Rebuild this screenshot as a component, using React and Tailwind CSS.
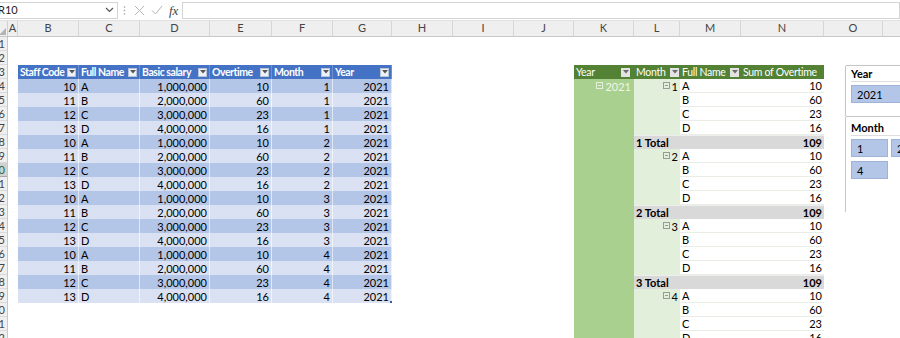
import React from "react";

const font = "font-['Lato','Liberation_Sans',sans-serif]";

const colDefs = [
  ["A", 10], ["B", 61], ["C", 61], ["D", 70], ["E", 62], ["F", 61], ["G", 59],
  ["H", 61], ["I", 61], ["J", 60], ["K", 60], ["L", 46], ["M", 61], ["N", 83],
  ["O", 59], ["P", 60],
];

const people = [
  ["10", "A", "1,000,000", "10"],
  ["11", "B", "2,000,000", "60"],
  ["12", "C", "3,000,000", "23"],
  ["13", "D", "4,000,000", "16"],
];

const tableRows = [];
[1, 2, 3, 4].forEach((m) =>
  people.forEach((p) => tableRows.push([...p, String(m), "2021"]))
);

function Tri({ color = "#404040" }) {
  return (
    <svg width="6" height="4" viewBox="0 0 6 4">
      <path d="M0 0 L6 0 L3 3.5 Z" fill={color} />
    </svg>
  );
}

function FilterBtn({ variant = "blue" }) {
  if (variant === "green") {
    return (
      <span className="w-[9px] h-[9px] bg-[#e3e3e3] flex items-center justify-center shrink-0">
        <Tri color="#6b6b6b" />
      </span>
    );
  }
  return (
    <span className="w-[9px] h-[9px] bg-[#eef1f6] border border-[#b9c3d6] flex items-center justify-center shrink-0">
      <Tri color="#555" />
    </span>
  );
}

function MinusBox({ color = "#9a9a9a" }) {
  return (
    <span
      className="inline-flex w-[7px] h-[7px] border items-center justify-center mr-[2px] mb-[1px]"
      style={{ borderColor: color }}
    >
      <span className="w-[3px] h-px" style={{ background: color }} />
    </span>
  );
}

function FormulaBar() {
  return (
    <div className="h-[21px] flex items-center bg-white border-b border-[#e1e1e1]">
      <div className="w-[118px] h-[17px] flex items-center justify-between border border-[#d4d4d4] border-l-0 bg-white">
        <span className="text-[11px] text-[#222] -ml-[2px]">R10</span>
        <svg width="9" height="6" viewBox="0 0 9 6" className="mr-[3px]">
          <path d="M1 1 L4.5 4.5 L8 1" stroke="#555" strokeWidth="1.2" fill="none" />
        </svg>
      </div>
      <div className="w-[12px] flex justify-center">
        <svg width="3" height="11" viewBox="0 0 3 11">
          <circle cx="1.5" cy="2" r="0.8" fill="#9a9a9a" />
          <circle cx="1.5" cy="5.5" r="0.8" fill="#9a9a9a" />
          <circle cx="1.5" cy="9" r="0.8" fill="#9a9a9a" />
        </svg>
      </div>
      <div className="h-[17px] flex items-center gap-[6px] pl-[4px] pr-[3px]">
        <svg width="11" height="11" viewBox="0 0 11 11">
          <path d="M1 1 L10 10 M10 1 L1 10" stroke="#b5b5b5" strokeWidth="1" />
        </svg>
        <svg width="12" height="10" viewBox="0 0 12 10">
          <path d="M1 5.5 L4.5 9 L11 1" stroke="#b5b5b5" strokeWidth="1" fill="none" />
        </svg>
        <span className="font-['Liberation_Serif',serif] italic text-[13px] text-[#444] leading-none">
          fx
        </span>
      </div>
      <div className="flex-1 h-[17px] border border-[#d4d4d4] bg-white ml-[1px]" />
    </div>
  );
}

function ColHeaders() {
  return (
    <div className="h-[16px] flex bg-[#efefef] border-b border-[#c8c8c8]">
      <div className="w-[8px] shrink-0 relative border-r border-[#d0d0d0]">
        <svg width="7" height="7" viewBox="0 0 7 7" className="absolute right-[1px] bottom-[1px]">
          <path d="M7 0 L7 7 L0 7 Z" fill="#b4b4b4" />
        </svg>
      </div>
      {colDefs.map(([l, w]) => (
        <div
          key={l}
          className="shrink-0 flex items-center justify-center border-r border-[#d6d6d6] text-[11px] text-[#444]"
          style={{ width: w }}
        >
          {l}
        </div>
      ))}
    </div>
  );
}

function RowHeaders() {
  const rows = Array.from({ length: 22 }, (_, i) => i + 1);
  return (
    <div className="w-[8px] shrink-0 flex flex-col bg-[#efefef] border-r border-[#c8c8c8]">
      {rows.map((r) => (
        <div
          key={r}
          className={
            "h-[14px] shrink-0 flex justify-end items-center overflow-hidden border-b text-[11px] leading-none pr-[2px] " +
            (r === 10
              ? "bg-[#d2d2d2] border-[#a9a9a9] text-[#1e6b3c]"
              : "border-[#dadada] text-[#444]")
          }
        >
          <span className="whitespace-nowrap">{r}</span>
        </div>
      ))}
    </div>
  );
}

const tw = [61, 61, 70, 62, 61, 59];
const theads = ["Staff Code", "Full Name", "Basic salary", "Overtime", "Month", "Year"];

function LeftTable() {
  return (
    <div className="flex flex-col w-[374px] shrink-0 relative">
      <div className="h-[14px] flex bg-[#4472c4]">
        {theads.map((h, i) => (
          <div
            key={h}
            className="shrink-0 flex items-center justify-between pl-[2px] pr-[2px] border-r border-[#6f8fd0] text-white font-bold text-[10.5px] tracking-[-0.45px] leading-none overflow-hidden"
            style={{ width: tw[i] }}
          >
            <span className="whitespace-nowrap">{h}</span>
            <FilterBtn />
          </div>
        ))}
      </div>
      {tableRows.map((r, ri) => (
        <div
          key={ri}
          className={"h-[14px] flex " + (ri % 2 === 0 ? "bg-[#b4c6e7]" : "bg-[#d9e1f2]")}
        >
          {r.map((c, ci) => (
            <div
              key={ci}
              className={
                "shrink-0 flex items-center px-[2px] text-[11px] leading-none text-black border-r border-white/60 " +
                (ci === 1 ? "justify-start" : "justify-end")
              }
              style={{ width: tw[ci] }}
            >
              {c}
            </div>
          ))}
        </div>
      ))}
      <span className="absolute right-[0px] bottom-[0px] w-[2px] h-[2px] bg-[#3a5a99]" />
    </div>
  );
}

const pw = { k: 60, l: 46, m: 61, n: 83 };

function Pivot() {
  const groups = [1, 2, 3, 4];
  const rows = [];
  groups.forEach((g, gi) => {
    people.forEach((p, pi) => {
      rows.push(
        <div key={g + "-" + pi} className="h-[14px] flex">
          <div
            className="shrink-0 bg-[#a9d08e] flex items-center justify-end pr-[3px] text-[11px] leading-none text-[#eef6e8]"
            style={{ width: pw.k }}
          >
            {gi === 0 && pi === 0 ? (
              <>
                <MinusBox color="#e6f1dd" />
                2021
              </>
            ) : null}
          </div>
          <div
            className="shrink-0 bg-[#e2efda] flex items-center justify-end pr-[2px] text-[11px] leading-none text-black"
            style={{ width: pw.l }}
          >
            {pi === 0 ? (
              <>
                <MinusBox />
                {g}
              </>
            ) : null}
          </div>
          <div
            className="shrink-0 bg-white flex items-center pl-[2px] text-[11px] leading-none text-black border-b border-[#e8ede5]"
            style={{ width: pw.m }}
          >
            {p[1]}
          </div>
          <div
            className="shrink-0 bg-white flex items-center justify-end pr-[2px] text-[11px] leading-none text-black border-b border-[#e8ede5]"
            style={{ width: pw.n }}
          >
            {p[3]}
          </div>
        </div>
      );
    });
    rows.push(
      <div key={g + "-t"} className="h-[14px] flex">
        <div className="shrink-0 bg-[#a9d08e]" style={{ width: pw.k }} />
        <div
          className="shrink-0 bg-[#d9d9d9] flex items-center justify-between px-[2px] text-[11px] leading-none font-bold text-black border-t border-[#eeeeee]"
          style={{ width: pw.l + pw.m + pw.n }}
        >
          <span>{g} Total</span>
          <span>109</span>
        </div>
      </div>
    );
  });
  return (
    <div className="flex flex-col shrink-0 ml-[182px]">
      <div className="h-[14px] flex bg-[#548235] text-white text-[10.5px] tracking-[-0.3px] leading-none">
        <div className="shrink-0 flex items-center justify-between pl-[2px] pr-[4px]" style={{ width: pw.k }}>
          <span>Year</span>
          <FilterBtn variant="green" />
        </div>
        <div className="shrink-0 flex items-center justify-between pl-[2px] pr-[1px]" style={{ width: pw.l }}>
          <span>Month</span>
          <FilterBtn variant="green" />
        </div>
        <div className="shrink-0 flex items-center justify-between pl-[2px] pr-[2px]" style={{ width: pw.m }}>
          <span className="whitespace-nowrap">Full Name</span>
          <FilterBtn variant="green" />
        </div>
        <div className="shrink-0 flex items-center pl-[2px] whitespace-nowrap overflow-hidden" style={{ width: pw.n }}>
          Sum of Overtime
        </div>
      </div>
      {rows}
    </div>
  );
}

function SlicerItem({ children, w }) {
  return (
    <div
      className="h-[18px] flex items-center pl-[5px] bg-[#b4c6e7] border border-[#9fb3d8] text-[11px] leading-none text-black shrink-0"
      style={{ width: w }}
    >
      {children}
    </div>
  );
}

function Slicers() {
  return (
    <div className="ml-[21px] w-[80px] shrink-0 flex flex-col">
      <div className="h-[52px] border border-[#c6c6c6] rounded-[2px] shadow-[1px_1px_2px_rgba(0,0,0,0.25)] px-[5px] bg-white">
        <div className="h-[16px] flex items-center font-bold text-[11px] leading-none border-b border-[#dedede]">
          Year
        </div>
        <div className="mt-[3px]">
          <SlicerItem w={80}>2021</SlicerItem>
        </div>
      </div>
      <div className="h-[95px] border-l border-[#c6c6c6] px-[5px] bg-white">
        <div className="h-[19px] flex items-end pb-[2px] font-bold text-[11px] leading-none border-b border-[#dedede]">
          Month
        </div>
        <div className="flex flex-col gap-[4px] mt-[3px]">
          <div className="flex gap-[3px]">
            <SlicerItem w={37}>1</SlicerItem>
            <SlicerItem w={37}>2</SlicerItem>
          </div>
          <div className="flex gap-[3px]">
            <SlicerItem w={37}>4</SlicerItem>
          </div>
        </div>
      </div>
    </div>
  );
}

export default function App() {
  return (
    <div className={"w-[900px] h-[338px] overflow-hidden bg-white " + font}>
      <FormulaBar />
      <ColHeaders />
      <div className="flex h-[301px] overflow-hidden">
        <RowHeaders />
        <div className="flex items-start pt-[28px] ml-[10px]">
          <LeftTable />
          <Pivot />
          <Slicers />
        </div>
      </div>
    </div>
  );
}
